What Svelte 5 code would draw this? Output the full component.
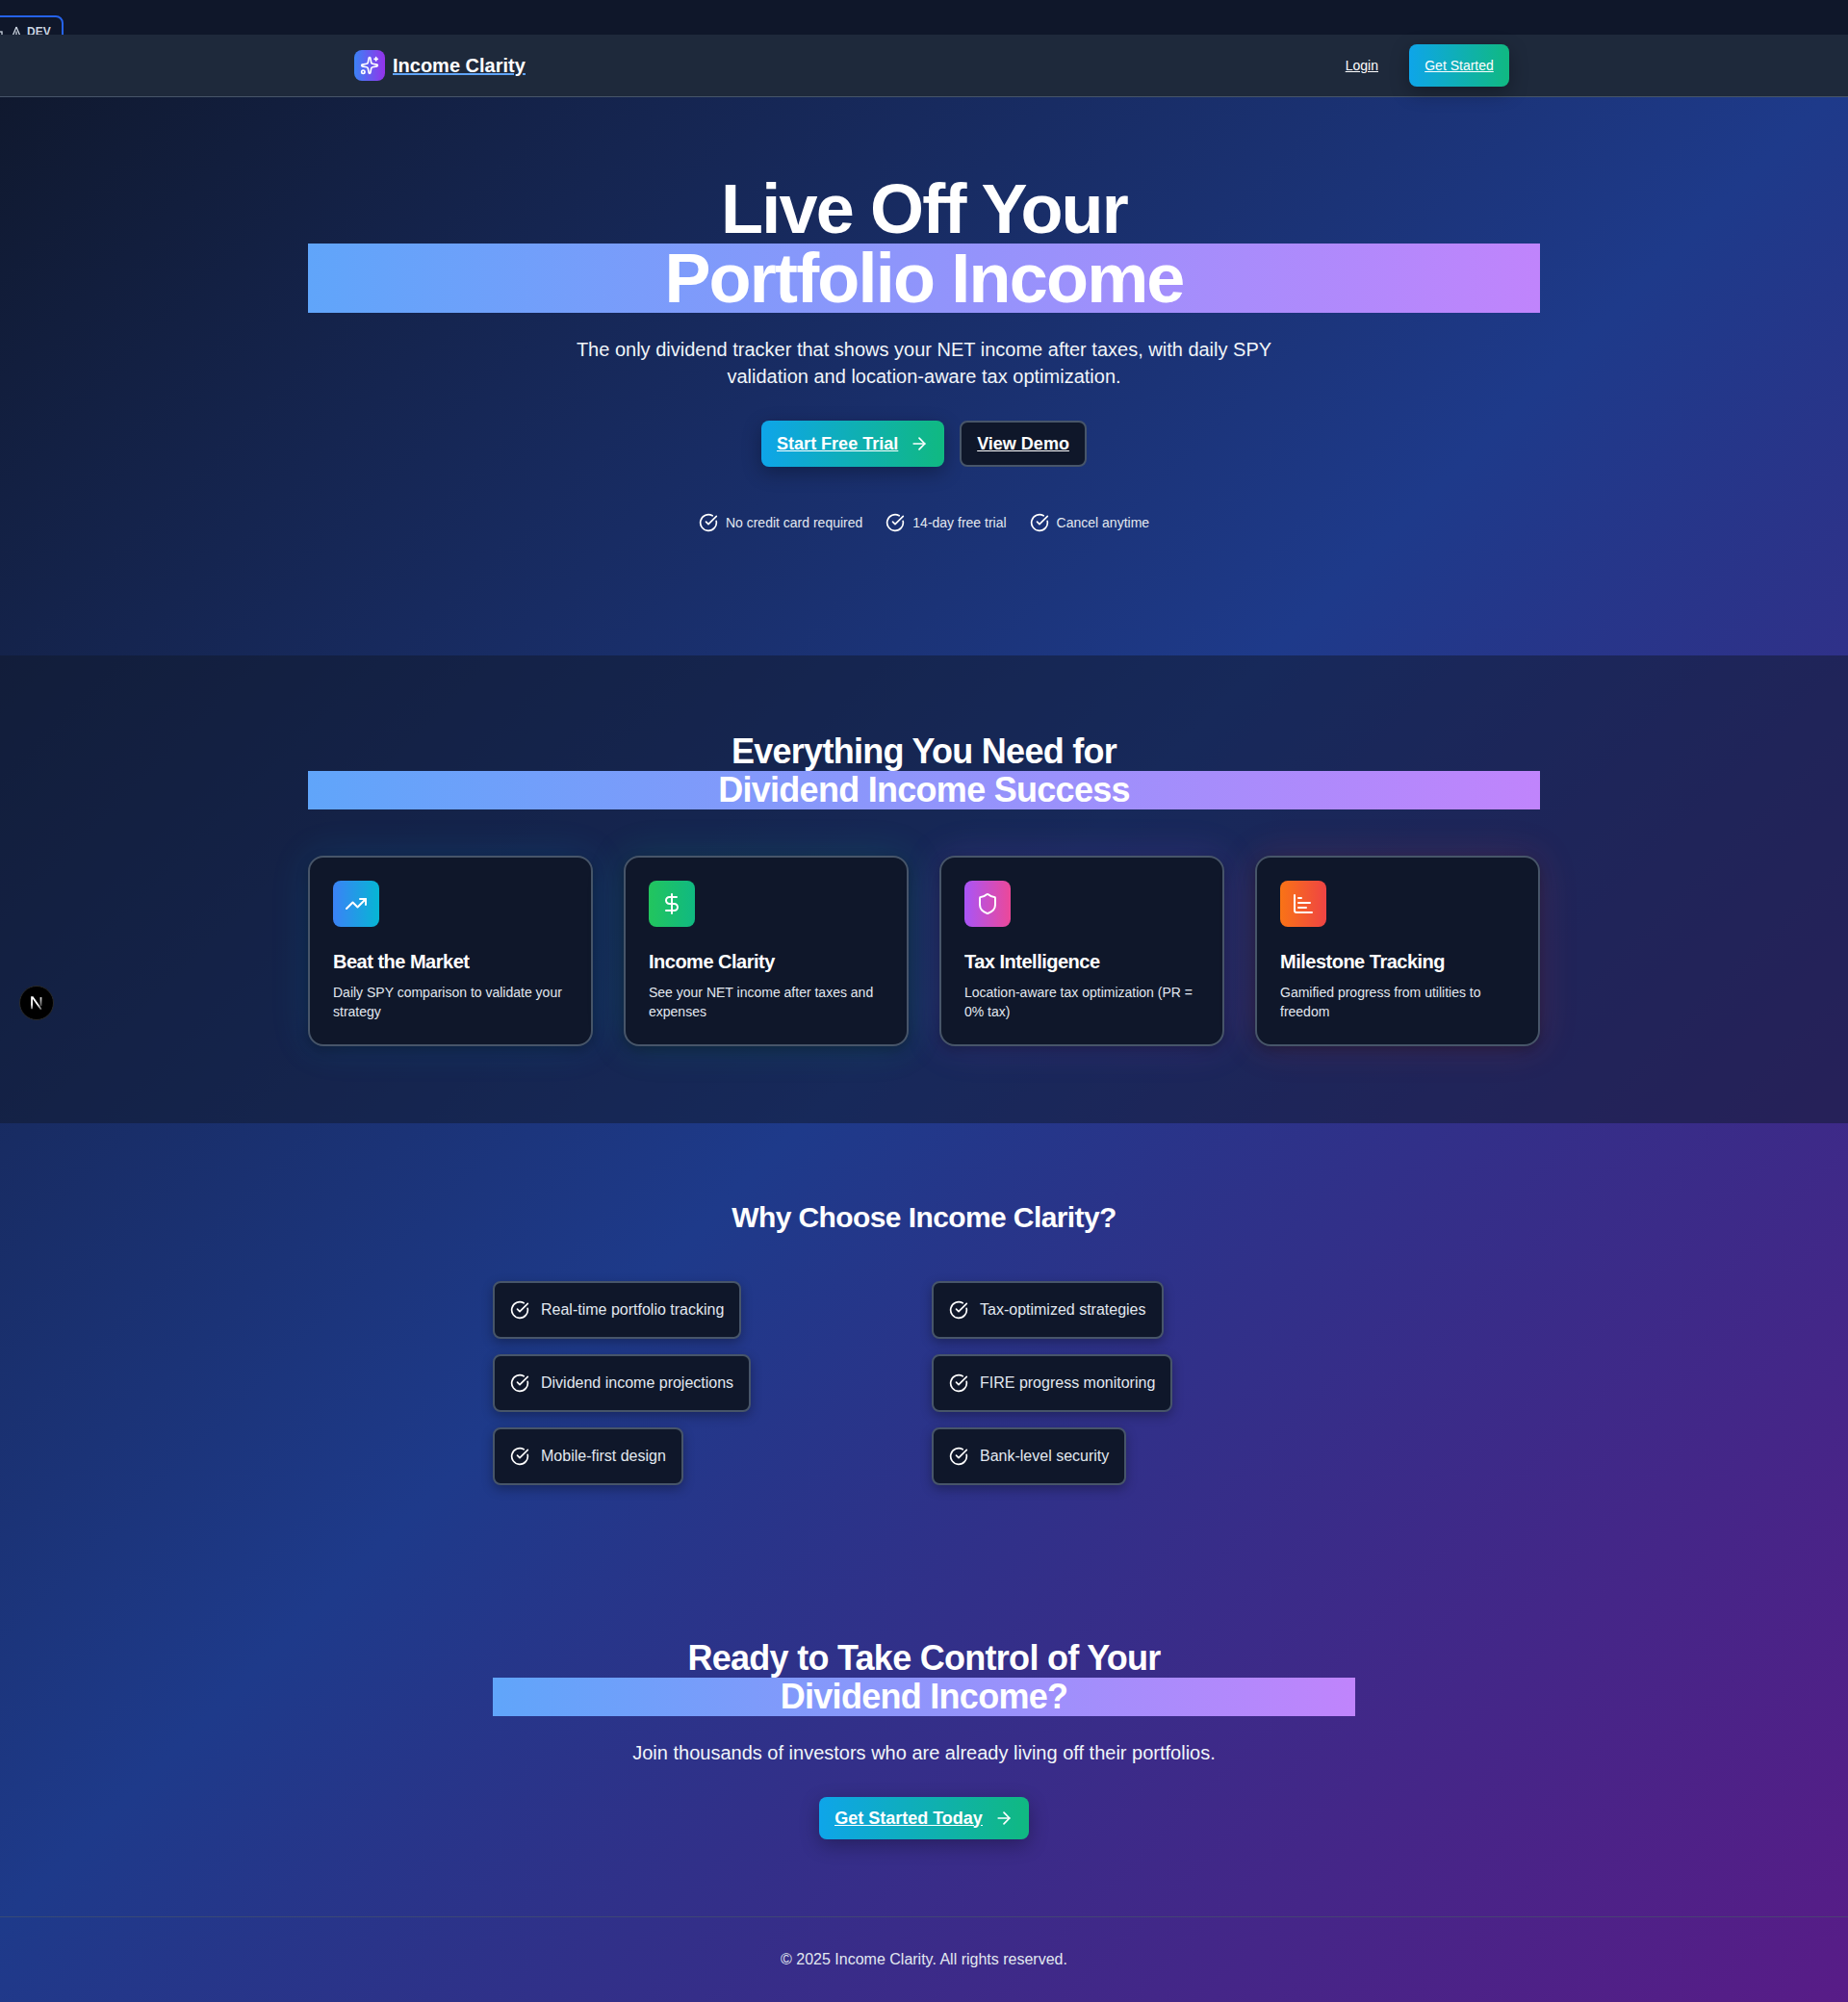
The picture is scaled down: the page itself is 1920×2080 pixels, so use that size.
<script lang="ts">
  const checks = ["No credit card required", "14-day free trial", "Cancel anytime"];

  const features = [
    {
      title: "Beat the Market",
      text: "Daily SPY comparison to validate your strategy",
      tone: "blue",
      paths: ["M16 7h6v6", "m22 7-8.5 8.5-5-5L2 17"],
    },
    {
      title: "Income Clarity",
      text: "See your NET income after taxes and expenses",
      tone: "green",
      paths: ["M12 2v20", "M17 5H9.5a3.5 3.5 0 0 0 0 7h5a3.5 3.5 0 0 1 0 7H6"],
    },
    {
      title: "Tax Intelligence",
      text: "Location-aware tax optimization (PR = 0% tax)",
      tone: "purple",
      paths: [
        "M20 13c0 5-3.5 7.5-7.66 8.95a1 1 0 0 1-.67-.01C7.5 20.5 4 18 4 13V6a1 1 0 0 1 1-1c2 0 4.5-1.2 6.24-2.72a1.17 1.17 0 0 1 1.52 0C14.51 3.81 17 5 19 5a1 1 0 0 1 1 1z",
      ],
    },
    {
      title: "Milestone Tracking",
      text: "Gamified progress from utilities to freedom",
      tone: "orange",
      paths: ["M3 3v16a2 2 0 0 0 2 2h16", "M7 16h8", "M7 11h12", "M7 6h3"],
    },
  ];

  const benefits = [
    "Real-time portfolio tracking",
    "Tax-optimized strategies",
    "Dividend income projections",
    "FIRE progress monitoring",
    "Mobile-first design",
    "Bank-level security",
  ];
</script>

{#snippet checkIcon()}
  <svg class="icon check" viewBox="0 0 24 24">
    <path d="M21.801 10A10 10 0 1 1 17 3.335" />
    <path d="m9 11 3 3L22 4" />
  </svg>
{/snippet}

{#snippet arrowIcon()}
  <svg class="icon arrow" viewBox="0 0 24 24">
    <path d="M5 12h14" />
    <path d="m12 5 7 7-7 7" />
  </svg>
{/snippet}

<div class="page">
  <div class="top-strip">
    <div class="dev-tab">
      <svg class="dev-box" viewBox="0 0 12 16">
        <rect x="0" y="9" width="11" height="6" />
      </svg>
      <svg class="dev-icon" viewBox="0 0 12 16">
        <path d="M6 4 1 16M6 4l5 12M6 8.5V16" />
      </svg>
      <span>DEV</span>
    </div>
  </div>

  <nav class="nav">
    <div class="nav-inner">
      <a class="brand" href="#top">
        <span class="brand-mark">
          <svg class="icon sparkles" viewBox="0 0 24 24">
            <path d="M11.017 2.814a1 1 0 0 1 1.966 0l1.051 5.558a2 2 0 0 0 1.594 1.594l5.558 1.051a1 1 0 0 1 0 1.966l-5.558 1.051a2 2 0 0 0-1.594 1.594l-1.051 5.558a1 1 0 0 1-1.966 0l-1.051-5.558a2 2 0 0 0-1.594-1.594l-5.558-1.051a1 1 0 0 1 0-1.966l5.558-1.051a2 2 0 0 0 1.594-1.594z" />
            <path d="M20 2v4" />
            <path d="M22 4h-4" />
            <circle cx="4" cy="20" r="2" />
          </svg>
        </span>
        <span class="brand-name">Income Clarity</span>
      </a>
      <div class="nav-actions">
        <a class="login" href="#login">Login</a>
        <a class="btn-primary small" href="#start">Get Started</a>
      </div>
    </div>
  </nav>

  <section class="hero">
    <h1>Live Off Your <span class="grad">Portfolio Income</span></h1>
    <p class="lead">
      The only dividend tracker that shows your NET income after taxes, with daily SPY validation and location-aware tax optimization.
    </p>
    <div class="hero-actions">
      <a class="btn-primary large" href="#trial"><span class="btn-label">Start Free Trial</span>{@render arrowIcon()}</a>
      <a class="btn-dark" href="#demo">View Demo</a>
    </div>
    <ul class="checks">
      {#each checks as item}
        <li>{@render checkIcon()}{item}</li>
      {/each}
    </ul>
  </section>

  <section class="features">
    <h2>Everything You Need for <span class="grad">Dividend Income Success</span></h2>
    <div class="card-grid">
      {#each features as f}
        <article class="card {f.tone}">
          <div class="card-icon">
            <svg class="icon" viewBox="0 0 24 24">
              {#each f.paths as d}
                <path {d} />
              {/each}
            </svg>
          </div>
          <h3>{f.title}</h3>
          <p>{f.text}</p>
        </article>
      {/each}
    </div>
  </section>

  <section class="why">
    <h2>Why Choose Income Clarity?</h2>
    <div class="why-grid">
      {#each benefits as b}
        <div class="why-cell">
          <div class="why-item">{@render checkIcon()}{b}</div>
        </div>
      {/each}
    </div>
  </section>

  <section class="cta">
    <h2>Ready to Take Control of Your <span class="grad">Dividend Income?</span></h2>
    <p>Join thousands of investors who are already living off their portfolios.</p>
    <a class="btn-primary cta-btn" href="#today"><span class="btn-label">Get Started Today</span>{@render arrowIcon()}</a>
  </section>

  <footer class="footer">© 2025 Income Clarity. All rights reserved.</footer>

  <button class="next-badge" aria-label="Next.js dev tools">
    <svg viewBox="0 0 16 16" width="18" height="18">
      <defs>
        <linearGradient id="nfade" x1="0" y1="0" x2="0" y2="1">
          <stop offset="0.6" stop-color="#fff" />
          <stop offset="1" stop-color="#fff" stop-opacity="0.4" />
        </linearGradient>
        <linearGradient id="nstem" x1="0" y1="0" x2="0" y2="1">
          <stop offset="0" stop-color="#fff" stop-opacity="0.9" />
          <stop offset="1" stop-color="#fff" stop-opacity="0.3" />
        </linearGradient>
      </defs>
      <path d="M3.6 13.5V2.8h.8L12.2 14" fill="none" stroke="url(#nfade)" stroke-width="1.6" />
      <rect x="11.2" y="2.8" width="1.6" height="8" fill="url(#nstem)" />
    </svg>
  </button>
</div>

<style>
  :global(body) {
    margin: 0;
    font-family: "Liberation Sans", Arial, sans-serif;
    color: #fff;
  }

  .page {
    position: relative;
    height: 2080px;
    box-sizing: border-box;
    overflow: hidden;
    background: linear-gradient(135deg, #0f172a 0%, #1e3a8a 50%, #581c87 100%);
  }

  a {
    color: inherit;
    text-decoration: underline;
  }

  h1,
  h2,
  h3,
  p,
  ul {
    margin: 0;
    padding: 0;
  }

  .icon {
    flex: none;
    width: 24px;
    height: 24px;
    fill: none;
    stroke: currentColor;
    stroke-width: 2;
    stroke-linecap: round;
    stroke-linejoin: round;
  }

  .top-strip {
    height: 36px;
    overflow: hidden;
    background: #0f172a;
  }

  .dev-tab {
    display: flex;
    align-items: flex-start;
    width: 86px;
    height: 40px;
    box-sizing: border-box;
    margin: 16px 0 0 -20px;
    padding: 6px 0 0 9px;
    border: 2px solid #2563eb;
    border-radius: 8px;
    color: #cbd5e1;
    font-size: 12px;
    font-weight: 700;
    line-height: 18px;
  }

  .dev-box,
  .dev-icon {
    flex: none;
    width: 12px;
    height: 16px;
    fill: none;
    stroke: currentColor;
    stroke-width: 1.3;
  }

  .dev-box {
    margin-right: 8px;
  }

  .dev-icon {
    margin-right: 5px;
  }

  .nav {
    height: 65px;
    box-sizing: border-box;
    background: #1e293b;
    border-bottom: 1px solid #475569;
  }

  .nav-inner {
    display: flex;
    align-items: center;
    justify-content: space-between;
    height: 64px;
    padding: 0 352px 0 368px;
  }

  .brand {
    display: flex;
    align-items: center;
    gap: 8px;
    text-decoration-color: #60a5fa;
  }

  .brand-mark {
    display: flex;
    align-items: center;
    justify-content: center;
    width: 32px;
    height: 32px;
    border-radius: 8px;
    background: linear-gradient(90deg, #3b82f6, #9333ea);
  }

  .sparkles {
    width: 20px;
    height: 20px;
  }

  .brand-name {
    font-size: 20px;
    font-weight: 700;
    line-height: 28px;
    text-decoration: underline;
    text-decoration-color: #60a5fa;
  }

  .nav-actions {
    display: flex;
    align-items: center;
    gap: 16px;
  }

  .login {
    padding: 0 16px;
    font-size: 14px;
    line-height: 20px;
  }

  .btn-primary {
    display: inline-flex;
    align-items: center;
    justify-content: center;
    box-sizing: border-box;
    border-radius: 8px;
    background: linear-gradient(90deg, #0ea5e9, #10b981);
    box-shadow: 0 6px 20px rgba(0, 0, 0, 0.3);
  }

  .btn-label {
    text-decoration: underline;
  }

  .btn-primary.small {
    width: 104px;
    height: 44px;
    font-size: 14px;
  }

  .btn-primary.large {
    gap: 12px;
    height: 48px;
    padding: 0 16px;
    font-size: 18px;
    font-weight: 700;
  }

  .arrow {
    width: 20px;
    height: 20px;
  }

  .hero {
    display: flex;
    flex-direction: column;
    align-items: center;
    height: 580px;
    box-sizing: border-box;
    padding: 80px 320px 0;
    text-align: center;
  }

  h1 {
    align-self: stretch;
    font-size: 72px;
    font-weight: 700;
    line-height: 72px;
    letter-spacing: -1.8px;
  }

  .grad {
    display: block;
    background: linear-gradient(90deg, #60a5fa, #c084fc);
  }

  .lead {
    width: 768px;
    margin-top: 24px;
    font-size: 20px;
    line-height: 28px;
    color: #f1f5f9;
  }

  .hero-actions {
    display: flex;
    gap: 16px;
    margin-top: 32px;
  }

  .btn-dark {
    display: inline-flex;
    align-items: center;
    box-sizing: border-box;
    height: 48px;
    padding: 0 16px;
    border: 2px solid #475569;
    border-radius: 8px;
    background: #0f172a;
    font-size: 18px;
    font-weight: 700;
  }

  .checks {
    display: flex;
    gap: 24px;
    margin-top: 48px;
    list-style: none;
    font-size: 14px;
    line-height: 20px;
    color: #e2e8f0;
  }

  .checks li {
    display: flex;
    align-items: center;
    gap: 8px;
  }

  .check {
    width: 20px;
    height: 20px;
    color: #fff;
  }

  .features {
    height: 486px;
    box-sizing: border-box;
    padding: 80px 320px 0;
    background: rgba(15, 23, 42, 0.5);
    text-align: center;
  }

  h2 {
    font-size: 36px;
    font-weight: 700;
    line-height: 40px;
    letter-spacing: -0.72px;
  }

  .card-grid {
    display: grid;
    grid-template-columns: repeat(4, 1fr);
    gap: 32px;
    margin-top: 48px;
    text-align: left;
  }

  .card {
    height: 198px;
    box-sizing: border-box;
    padding: 24px;
    border: 2px solid #475569;
    border-radius: 16px;
    background: #0f172a;
  }

  .card.blue {
    box-shadow: 0 0 40px rgba(14, 165, 233, 0.14), 0 4px 12px rgba(0, 0, 0, 0.3);
  }

  .card.green {
    box-shadow: 0 0 40px rgba(16, 185, 129, 0.16), 0 4px 12px rgba(0, 0, 0, 0.3);
  }

  .card.purple {
    box-shadow: 0 0 40px rgba(168, 85, 247, 0.16), 0 4px 12px rgba(0, 0, 0, 0.3);
  }

  .card.orange {
    box-shadow: 0 0 40px rgba(239, 68, 68, 0.16), 0 4px 12px rgba(0, 0, 0, 0.3);
  }

  .card-icon {
    display: flex;
    align-items: center;
    justify-content: center;
    width: 48px;
    height: 48px;
    margin-bottom: 22px;
    border-radius: 8px;
  }

  .blue .card-icon {
    background: linear-gradient(90deg, #3b82f6, #06b6d4);
  }

  .green .card-icon {
    background: linear-gradient(90deg, #22c55e, #10b981);
  }

  .purple .card-icon {
    background: linear-gradient(90deg, #a855f7, #ec4899);
  }

  .orange .card-icon {
    background: linear-gradient(90deg, #f97316, #ef4444);
  }

  h3 {
    font-size: 20px;
    font-weight: 700;
    line-height: 28px;
    letter-spacing: -0.5px;
  }

  .card p {
    margin-top: 8px;
    font-size: 14px;
    line-height: 20px;
    color: #e2e8f0;
  }

  .why {
    height: 456px;
    box-sizing: border-box;
    padding-top: 80px;
    text-align: center;
  }

  .why h2 {
    font-size: 30px;
    line-height: 36px;
    letter-spacing: -0.6px;
  }

  .why-grid {
    display: grid;
    grid-template-columns: 424px 424px;
    gap: 16px 32px;
    width: 896px;
    margin: 48px auto 0;
    text-align: left;
  }

  .why-cell {
    display: flex;
  }

  .why-item {
    display: flex;
    align-items: center;
    gap: 12px;
    padding: 16px;
    border: 2px solid #475569;
    border-radius: 8px;
    background: #0f172a;
    box-shadow: 0 4px 12px rgba(0, 0, 0, 0.3);
    font-size: 16px;
    line-height: 24px;
    color: #e2e8f0;
  }

  .cta {
    height: 368px;
    box-sizing: border-box;
    padding-top: 80px;
    text-align: center;
  }

  .cta h2 {
    width: 896px;
    margin: 0 auto;
  }

  .cta p {
    margin-top: 24px;
    font-size: 20px;
    line-height: 28px;
    color: #f1f5f9;
  }

  .cta-btn {
    gap: 12px;
    height: 44px;
    margin-top: 32px;
    padding: 0 16px;
    font-size: 18px;
    font-weight: 700;
  }

  .footer {
    height: 89px;
    box-sizing: border-box;
    padding: 32px 0;
    border-top: 1px solid rgba(71, 85, 105, 0.6);
    font-size: 16px;
    line-height: 24px;
    text-align: center;
    color: #e2e8f0;
  }

  .next-badge {
    position: absolute;
    left: 20px;
    top: 1024px;
    display: flex;
    align-items: center;
    justify-content: center;
    width: 36px;
    height: 36px;
    padding: 0;
    border: 1px solid #2a2a2a;
    border-radius: 50%;
    background: #000;
  }
</style>
